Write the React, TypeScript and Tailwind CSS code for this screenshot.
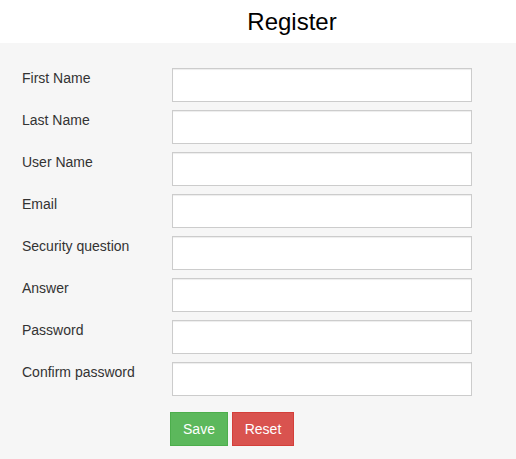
import React from 'react';

const fields = [
  'First Name',
  'Last Name',
  'User Name',
  'Email',
  'Security question',
  'Answer',
  'Password',
  'Confirm password',
];

export default function App() {
  return (
    <div className="min-h-[459px] bg-[#f6f6f6] font-['Liberation_Sans',Arial,sans-serif] text-[#333]">
      <div className="flex h-[43px] items-center justify-center bg-white pl-[68px]">
        <h1 className="text-[24px] leading-none text-black">Register</h1>
      </div>
      <form className="flex flex-col gap-[8px] pt-[25px]">
        {fields.map((f) => (
          <div key={f} className="flex items-start">
            <label className="w-[172px] pl-[22px] text-[14px] leading-[20px]">{f}</label>
            <input
              type={f.toLowerCase().includes('password') ? 'password' : 'text'}
              className="h-[34px] w-[300px] border border-[#ccc] bg-white shadow-[inset_0_1px_1px_rgba(0,0,0,0.075)] outline-none"
            />
          </div>
        ))}
        <div className="mt-[8px] flex gap-[4px] pl-[170px]">
          <button
            type="button"
            className="h-[34px] w-[58px] border border-[#4cae4c] bg-[#5cb85c] text-[14px] text-white"
          >
            Save
          </button>
          <button
            type="button"
            className="h-[34px] w-[62px] border border-[#d43f3a] bg-[#d9534f] text-[14px] text-white"
          >
            Reset
          </button>
        </div>
      </form>
    </div>
  );
}
